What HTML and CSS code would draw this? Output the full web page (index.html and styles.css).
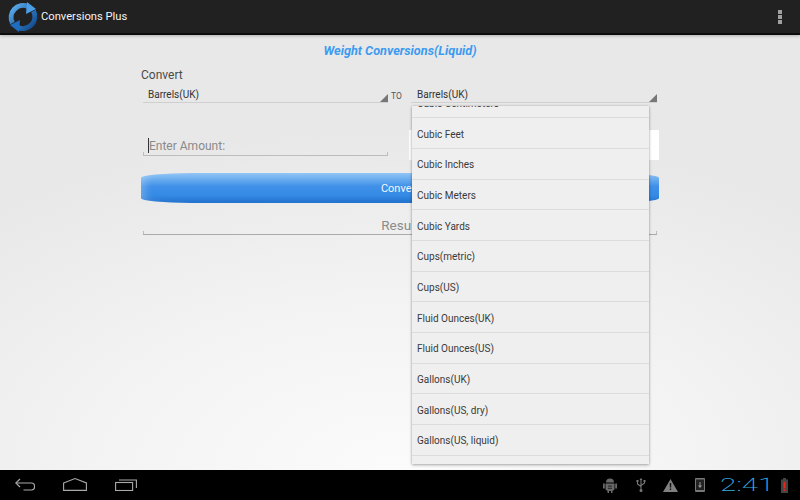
FILE: index.html
```html
<!DOCTYPE html>
<html lang="en">
<head>
<meta charset="utf-8">
<title>Conversions Plus</title>
<link rel="stylesheet" href="styles.css">
</head>
<body>
<div class="page">
  <header class="actionbar">
    <svg class="logo" width="30" height="30" viewBox="0 0 30 30">
      <defs>
        <linearGradient id="lg" x1="0" y1="0" x2="1" y2="1">
          <stop offset="0" stop-color="#62b4f2"/>
          <stop offset="1" stop-color="#124f96"/>
        </linearGradient>
        <linearGradient id="lg2" x1="0" y1="0" x2="1" y2="1">
          <stop offset="0" stop-color="#3f95e3"/>
          <stop offset="1" stop-color="#0f4586"/>
        </linearGradient>
      </defs>
      <path d="M4.500 21A12 12 0 0 1 20 4.500" fill="none" stroke="url(#lg)" stroke-width="5"/>
      <path d="M19 0l9 7-10 5z" fill="#4a9fe8"/>
      <path d="M25.500 9A12 12 0 0 1 10 25.500" fill="none" stroke="url(#lg2)" stroke-width="5"/>
      <path d="M11 30l-9-7 10-5z" fill="#1f6cc0"/>
    </svg>
    <span class="app-title">Conversions Plus</span>
    <div class="overflow"><i></i><i></i><i></i></div>
  </header>

  <main class="content">
    <h1 class="heading">Weight Conversions(Liquid)</h1>
    <div class="form">
      <div class="label">Convert</div>
      <div class="spin-row">
        <div class="spinner"><span>Barrels(UK)</span></div>
        <span class="to">TO</span>
        <div class="spinner spinner-right"><span>Barrels(UK)</span></div>
      </div>
      <div class="input-row">
        <div class="amount"><span class="caret"></span><span>Enter Amount:</span></div>
        <div class="whitebox"></div>
      </div>
      <button class="convert">Convert</button>
      <div class="result">Result</div>
    </div>
  </main>

  <nav class="systembar">
    <div class="nav-icons">
      <svg width="20" height="13" viewBox="0 0 20 13" fill="none" stroke="#aaa" stroke-width="1.100">
        <path d="M5 1L.8 5 5 9"/>
        <path d="M1 5H16.500c1.700 0 3 1 3 3v1c0 2-1.300 3-3 3H8.500"/>
      </svg>
      <svg width="24" height="13" viewBox="0 0 24 13" fill="none" stroke="#aaa" stroke-width="1.100">
        <path d="M.6 5L12 .6 23.400 5v7.400H.6z"/>
      </svg>
      <svg width="22" height="13" viewBox="0 0 22 13" fill="none" stroke="#aaa" stroke-width="1.100">
        <rect x=".6" y="4.500" width="17" height="8"/>
        <path d="M4 2H21.400V10"/>
      </svg>
    </div>
    <div class="status">
      <svg width="14" height="15" viewBox="0 0 14 15">
        <path d="M3 4.500a4 4 0 0 1 8 0zM2.500 5.500h9v6L9.500 13v2H8v-2H6v2H4.500v-2l-2-1.500zM0 5.500h1.800v5H0zM12.200 5.500H14v5h-1.800z" fill="#686868"/>
        <path d="M5 7.500h4v1.200H5zM5 9.800h4V11H5z" fill="#333"/>
      </svg>
      <svg class="st-usb" width="10" height="14" viewBox="0 0 10 14">
        <path d="M5 1v11M1.500 3.500v2.500l3.500 2.500M8.500 3.500v1.500L5 7.500" fill="none" stroke="#777" stroke-width="1.100"/>
        <path d="M5 0l1.500 2h-3zM.5 2h2v2h-2zM7.500 2h2v2h-2z" fill="#777"/>
        <circle cx="5" cy="12.500" r="1.500" fill="#777"/>
      </svg>
      <svg class="st-warn" width="15" height="13" viewBox="0 0 15 13">
        <path d="M7.500 0L15 13H0z" fill="#808080"/>
        <path d="M6.800 4h1.400v4.500H6.800zM6.800 9.500h1.400V11H6.800z" fill="#111"/>
      </svg>
      <svg class="st-dev" width="10" height="14" viewBox="0 0 10 14">
        <rect width="10" height="14" rx="1" fill="#777"/>
        <rect x="1" y="1.500" width="8" height="10.500" fill="#222"/>
        <path d="M4.500 4h1v3.500H7L5 10 3 7.500h1.500z" fill="#999"/>
      </svg>
      <span class="clock">2:41</span>
      <svg class="st-batt" width="7" height="15" viewBox="0 0 7 15">
        <path d="M2 0h3v1.500h2V15H0V1.500h2z" fill="#444"/>
        <path d="M2.500 4h2v6.500h-2zM2.500 11.500h2V13h-2z" fill="#e8261c"/>
      </svg>
    </div>
  </nav>

  <div class="dropdown">
    <ul class="dropdown-list">
      <li>Cubic Centimeters</li>
      <li>Cubic Feet</li>
      <li>Cubic Inches</li>
      <li>Cubic Meters</li>
      <li>Cubic Yards</li>
      <li>Cups(metric)</li>
      <li>Cups(US)</li>
      <li>Fluid Ounces(UK)</li>
      <li>Fluid Ounces(US)</li>
      <li>Gallons(UK)</li>
      <li>Gallons(US, dry)</li>
      <li>Gallons(US, liquid)</li>
      <li>Grams</li>
    </ul>
  </div>
</div>
</body>
</html>
```

FILE: styles.css
```css
* { box-sizing: border-box; }
html, body { margin: 0; padding: 0; }
body { font-family: Roboto, "Liberation Sans", sans-serif; }
.page {
  position: relative;
  width: 800px;
  height: 500px;
  overflow: hidden;
  display: flex;
  flex-direction: column;
  background: #000;
}
.actionbar {
  height: 35px;
  flex: none;
  display: flex;
  align-items: center;
  padding: 0 18px 0 8px;
  background: #212121;
  border-bottom: 2px solid #0c0c0c;
  box-shadow: 0 1px 3px rgba(0,0,0,.25);
  position: relative;
  z-index: 1;
}
.logo { flex: none; }
.app-title {
  margin-left: 3px;
  font-size: 11.200px;
  color: #f4f4f4;
}
.overflow {
  margin-left: auto;
  display: flex;
  flex-direction: column;
  gap: 1px;
}
.overflow i {
  display: block;
  width: 4px;
  height: 4px;
  background: #a0a0a0;
}
.content {
  flex: 1;
  display: flex;
  flex-direction: column;
  align-items: center;
  background: radial-gradient(ellipse 620px 340px at 50% 100%, #fbfbfb 0%, #f3f3f3 50%, #e8e8e8 100%);
}
.heading {
  margin: 9px 0 0;
  height: 14px;
  line-height: 14px;
  font-size: 12.700px;
  font-weight: 700;
  font-style: italic;
  color: #3d9bf0;
}
.form {
  width: 518px;
  display: flex;
  flex-direction: column;
}
.label {
  margin-top: 10px;
  font-size: 12px;
  line-height: 14px;
  color: #4a4a4a;
}
.spin-row {
  display: flex;
  align-items: flex-start;
  margin-top: 4px;
  padding: 0 2px;
}
.spinner {
  position: relative;
  width: 245px;
  height: 17px;
  padding: 2px 0 0 5px;
  font-size: 10px;
  line-height: 14px;
  color: #333;
  border-bottom: 1px solid #cfcfcf;
}
.spinner::after {
  content: "";
  position: absolute;
  right: 0;
  bottom: 0;
  border-style: solid;
  border-width: 0 0 8px 8px;
  border-color: transparent transparent #777 transparent;
}
.spinner-right { width: 246px; padding-left: 6px; }
.to {
  width: 23px;
  padding-left: 3px;
  margin-top: 5px;
  font-size: 8.500px;
  line-height: 11px;
  color: #555;
}
.input-row {
  display: flex;
  margin-top: 27px;
  padding: 0 0 0 2px;
  align-items: flex-start;
}
.amount {
  position: relative;
  width: 245px;
  height: 26px;
  padding: 6px 0 0 5px;
  display: flex;
  align-items: center;
  font-size: 12px;
  color: #8a8a8a;
  border-bottom: 1px solid #bdbdbd;
}
.amount::before, .amount::after, .result::before, .result::after {
  content: "";
  position: absolute;
  bottom: 0;
  width: 1px;
  height: 3px;
  background: #bdbdbd;
}
.amount::before, .result::before { left: 0; }
.amount::after, .result::after { right: 0; }
.caret {
  width: 1px;
  height: 15px;
  background: #333;
}
.whitebox {
  width: 250px;
  height: 30px;
  margin-left: 21px;
  background: #fff;
}
.convert {
  display: block;
  width: 518px;
  height: 30px;
  margin: 13px 0 0;
  padding: 0;
  border: 0;
  border-radius: 50px / 5px;
  font: 11px Roboto, "Liberation Sans", sans-serif;
  color: #f4f8ff;
  background: linear-gradient(#93c5f5 0%, #6fb0f0 18%, #3f90e8 45%, #348ae4 75%, #2070cc 100%);
  box-shadow: inset 10px 0 8px -6px rgba(255,255,255,.25);
}
.result {
  position: relative;
  margin: 12px 2px 0;
  height: 20px;
  font-size: 13.500px;
  line-height: 20px;
  text-align: center;
  color: #8a8a8a;
  border-bottom: 1px solid #aaa;
}
.systembar {
  height: 30px;
  flex: none;
  display: flex;
  align-items: center;
  justify-content: space-between;
  background: #000;
}
.nav-icons {
  display: flex;
  align-items: center;
  gap: 28px;
  padding: 0 0 1px 15px;
}
.status {
  display: flex;
  align-items: center;
  padding-right: 12px;
}
.st-usb { margin-left: 19px; }
.st-warn { margin-left: 17px; }
.st-dev { margin-left: 17px; }
.clock {
  display: block;
  width: 37px;
  margin: 0 24px 0 15px;
  font-size: 19px;
  font-weight: 200;
  line-height: 20px;
  white-space: nowrap;
  color: #38ace0;
  transform: scaleX(1.55);
  transform-origin: left center;
}
.st-batt { margin-left: 0; }
.dropdown {
  position: absolute;
  left: 412px;
  top: 106px;
  width: 237px;
  height: 358px;
  overflow: hidden;
  background: #efefef;
  box-shadow: 0 1px 3px rgba(0,0,0,.3), 0 0 2px rgba(0,0,0,.15);
}
.dropdown-list {
  list-style: none;
  margin: -18.330px 0 0;
  padding: 0;
}
.dropdown-list li {
  height: 30.670px;
  padding: 2px 0 0 5px;
  display: flex;
  align-items: center;
  font-size: 10px;
  color: #3a3a3a;
  border-bottom: 1px solid #dcdcdc;
}
```
